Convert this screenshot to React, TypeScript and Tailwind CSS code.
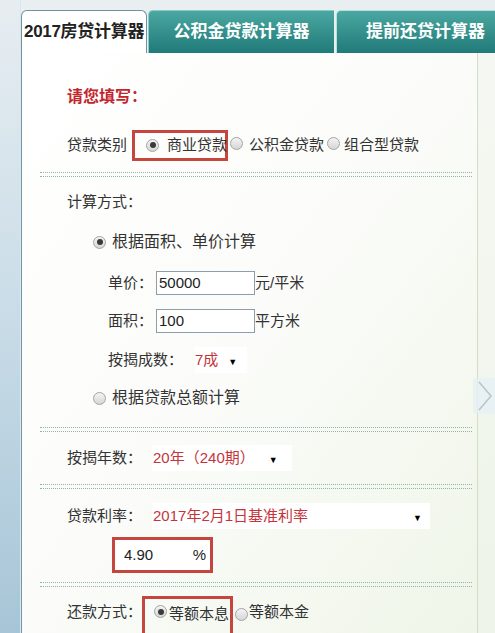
import React from 'react';

const font = "font-['Liberation_Sans','Noto_Sans_CJK_SC',sans-serif]";

function Radio({ checked = false }: { checked?: boolean }) {
    return (
        <span className="inline-flex items-center justify-center w-[13px] h-[13px] rounded-full border border-[#a4a4a4] bg-gradient-to-b from-[#f4f4f4] to-[#d6d6d6] shrink-0">
            {checked && <span className="w-[6px] h-[6px] rounded-full bg-[#3a3a3a]" />}
        </span>
    );
}

function Dots() {
    return <div className="ml-[18px] w-[432px] h-[5px] border-y border-dotted border-[#93b3aa]" />;
}

function Arrow() {
    return <span className="text-[9px] text-black leading-none">▼</span>;
}

export default function App() {
    return (
        <div className={`w-[495px] h-[633px] overflow-hidden flex bg-[#e9eef1] text-[15px] text-[#333] ${font}`}>
            {/* left strip */}
            <div className="w-[21px] h-full bg-gradient-to-b from-[#e7edf1] via-[#c9dce7] to-[#a7c5d7] border-r border-[#dbe7ee]" />

            <div className="flex-1 flex flex-col pt-[10px] min-w-0">
                {/* Tabs */}
                <div className="flex h-[43px] shrink-0 items-stretch">
                    <div className="w-[126px] shrink-0 bg-white border border-b-0 border-[#6f929c] rounded-t-[6px] flex items-center pl-[2px] text-[17px] font-bold text-[#222] tracking-[-0.3px]">
                        2017房贷计算器
                    </div>
                    <div className="w-[186px] shrink-0 ml-[1px] bg-gradient-to-b from-[#4aa7a1] to-[#1f7b79] rounded-tl-[5px] border-t border-l border-[#8ccac5] flex items-center justify-center text-[17px] font-bold text-white">
                        公积金贷款计算器
                    </div>
                    <div className="flex-1 ml-[2px] bg-gradient-to-b from-[#4aa7a1] to-[#1f7b79] rounded-tl-[5px] border-t border-l border-[#b9dedb] flex items-center justify-end pr-[10px] text-[17px] font-bold text-white whitespace-nowrap">
                        提前还贷计算器
                    </div>
                </div>

                {/* Panel */}
                <div className="flex-1 flex relative min-h-0">
                    <div className="w-[457px] shrink-0 border-l border-r border-l-[#7495a5] border-r-[#d3dec6] bg-gradient-to-br from-white via-[#fbfcf9] to-[#eff5e8] pt-[27px] overflow-hidden">
                        <div className="h-[34px] pl-[45px] flex items-center text-[16px] font-bold text-[#c3252d]">请您填写：</div>

                        <div className="mt-[14px] h-[34px] pl-[45px] flex items-center whitespace-nowrap">
                            <span>贷款类别</span>
                            <span className="ml-[5px] h-[31px] w-[96px] border-[3px] border-[#c4463f] flex items-center pl-[11px]">
                                <Radio checked />
                                <span className="ml-[8px]">商业贷款</span>
                            </span>
                            <span className="ml-[2px]"><Radio /></span>
                            <span className="ml-[6px]">公积金贷款</span>
                            <span className="ml-[3px]"><Radio /></span>
                            <span className="ml-[4px]">组合型贷款</span>
                        </div>

                        <div className="mt-[10px]"><Dots /></div>

                        <div className="mt-[8px] h-[34px] pl-[45px] flex items-center">计算方式：</div>

                        <div className="mt-[6px] h-[34px] pl-[71px] flex items-center">
                            <Radio checked />
                            <span className="ml-[6px] text-[16px]">根据面积、单价计算</span>
                        </div>

                        <div className="mt-[7px] h-[34px] pl-[86px] flex items-center">
                            <span className="w-[48px]">单价：</span>
                            <span className="w-[99px] h-[24px] border border-[#8c9ea9] bg-white flex items-center pl-[2px] text-[#222]">50000</span>
                            <span>元/平米</span>
                        </div>

                        <div className="mt-[4px] h-[34px] pl-[86px] flex items-center">
                            <span className="w-[48px]">面积：</span>
                            <span className="w-[99px] h-[24px] border border-[#8c9ea9] bg-white flex items-center pl-[2px] text-[#222]">100</span>
                            <span>平方米</span>
                        </div>

                        <div className="mt-[5px] h-[34px] pl-[86px] flex items-center">
                            <span>按揭成数：</span>
                            <span className="ml-[12px] h-[26px] w-[52px] bg-white flex items-center">
                                <span className="text-[#c4343b]">7成</span>
                                <span className="ml-[10px]"><Arrow /></span>
                            </span>
                        </div>

                        <div className="mt-[4px] h-[34px] pl-[71px] flex items-center">
                            <Radio />
                            <span className="ml-[6px] text-[16px]">根据贷款总额计算</span>
                        </div>

                        <div className="mt-[12px]"><Dots /></div>

                        <div className="mt-[9px] h-[34px] pl-[45px] flex items-center">
                            <span>按揭年数：</span>
                            <span className="ml-[10px] h-[26px] w-[140px] bg-white flex items-center pl-[1px]">
                                <span className="text-[#c4343b]">20年（240期）</span>
                                <span className="ml-[14px]"><Arrow /></span>
                            </span>
                        </div>

                        <div className="mt-[9px]"><Dots /></div>

                        <div className="mt-[10px] h-[34px] pl-[45px] flex items-center">
                            <span>贷款利率：</span>
                            <span className="ml-[10px] h-[26px] w-[278px] bg-white flex items-center pl-[1px]">
                                <span className="text-[#c4343b]">2017年2月1日基准利率</span>
                                <span className="ml-auto mr-[8px]"><Arrow /></span>
                            </span>
                        </div>

                        <div className="mt-[4px] ml-[90px] w-[101px] h-[36px] border-[3px] border-[#c4463f] bg-white flex items-center pl-[9px] pr-[4px] text-[#222] font-['Liberation_Sans',sans-serif]">
                            <span>4.90</span>
                            <span className="ml-auto">%</span>
                        </div>

                        <div className="mt-[9px]"><Dots /></div>

                        <div className="mt-[9px] h-[40px] pl-[45px] flex items-start whitespace-nowrap">
                            <span className="mt-[5px]">还款方式：</span>
                            <span className="h-[40px] w-[91px] border-[3px] border-b-0 border-[#c4463f] flex items-start pt-[6px] pl-[9px]">
                                <Radio checked />
                                <span className="ml-[2px] -mt-[2px]">等额本息</span>
                            </span>
                            <span className="mt-[9px] ml-[2px]"><Radio /></span>
                            <span className="mt-[5px] ml-[1px]">等额本金</span>
                        </div>
                    </div>

                    <div className="flex-1 bg-gradient-to-b from-[#f5f8f2] to-[#eef4ea]" />

                    {/* slide arrow */}
                    <div className="absolute left-[452px] top-[325px] w-[24px] h-[36px] rounded-l-[4px] bg-[#e6f0f4]/80 flex items-center justify-center">
                        <svg width="16" height="32" viewBox="0 0 16 32" fill="none">
                            <path d="M2 2 L14 16 L2 30" stroke="#b8c4ca" strokeWidth="1.5" />
                        </svg>
                    </div>
                </div>
            </div>
        </div>
    );
}
